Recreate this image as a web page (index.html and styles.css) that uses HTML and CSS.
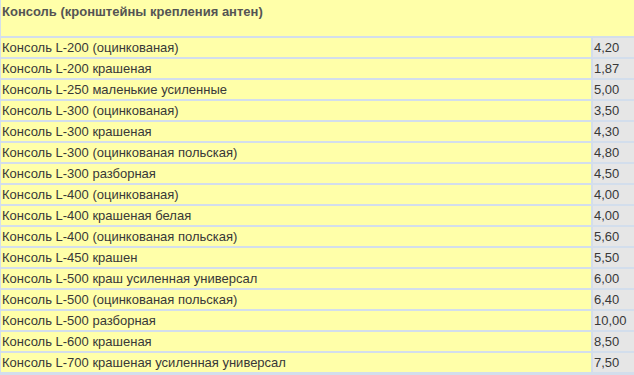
FILE: index.html
```html
<!DOCTYPE html>
<html lang="ru">
<head>
<meta charset="utf-8">
<link rel="stylesheet" href="styles.css">
</head>
<body>
<div class="table">
  <div class="head">Консоль (кронштейны крепления антен)</div>
  <div class="name">Консоль L-200 (оцинкованая)</div><div class="price">4,20</div>
  <div class="name">Консоль L-200 крашеная</div><div class="price">1,87</div>
  <div class="name">Консоль L-250 маленькие усиленные</div><div class="price">5,00</div>
  <div class="name">Консоль L-300 (оцинкованая)</div><div class="price">3,50</div>
  <div class="name">Консоль L-300 крашеная</div><div class="price">4,30</div>
  <div class="name">Консоль L-300 (оцинкованая польская)</div><div class="price">4,80</div>
  <div class="name">Консоль L-300 разборная</div><div class="price">4,50</div>
  <div class="name">Консоль L-400 (оцинкованая)</div><div class="price">4,00</div>
  <div class="name">Консоль L-400 крашеная белая</div><div class="price">4,00</div>
  <div class="name">Консоль L-400 (оцинкованая польская)</div><div class="price">5,60</div>
  <div class="name">Консоль L-450 крашен</div><div class="price">5,50</div>
  <div class="name">Консоль L-500 краш усиленная универсал</div><div class="price">6,00</div>
  <div class="name">Консоль L-500 (оцинкованая польская)</div><div class="price">6,40</div>
  <div class="name">Консоль L-500 разборная</div><div class="price">10,00</div>
  <div class="name">Консоль L-600 крашеная</div><div class="price">8,50</div>
  <div class="name">Консоль L-700 крашеная усиленная универсал</div><div class="price">7,50</div>
</div>
</body>
</html>
```
FILE: styles.css
```css
html, body {
  margin: 0;
  padding: 0;
  background: #d3deec;
}
.table {
  display: grid;
  grid-template-columns: 590px 1fr;
  grid-template-rows: 36px;
  grid-auto-rows: 19px;
  gap: 2px;
  width: 640px;
  padding: 0 0 2px 1px;
  font-family: "Liberation Sans", Arial, sans-serif;
  font-size: 13px;
  color: #383838;
}
.head {
  grid-column: 1 / span 2;
  background: #ffffa9;
  font-weight: bold;
  color: #545454;
  padding: 4px 0 0 1px;
  line-height: 15px;
}
.name {
  background: #ffffa9;
  padding-left: 1px;
  line-height: 19px;
  white-space: nowrap;
}
.price {
  background: #e6e6e6;
  padding-left: 1px;
  line-height: 19px;
}
```
